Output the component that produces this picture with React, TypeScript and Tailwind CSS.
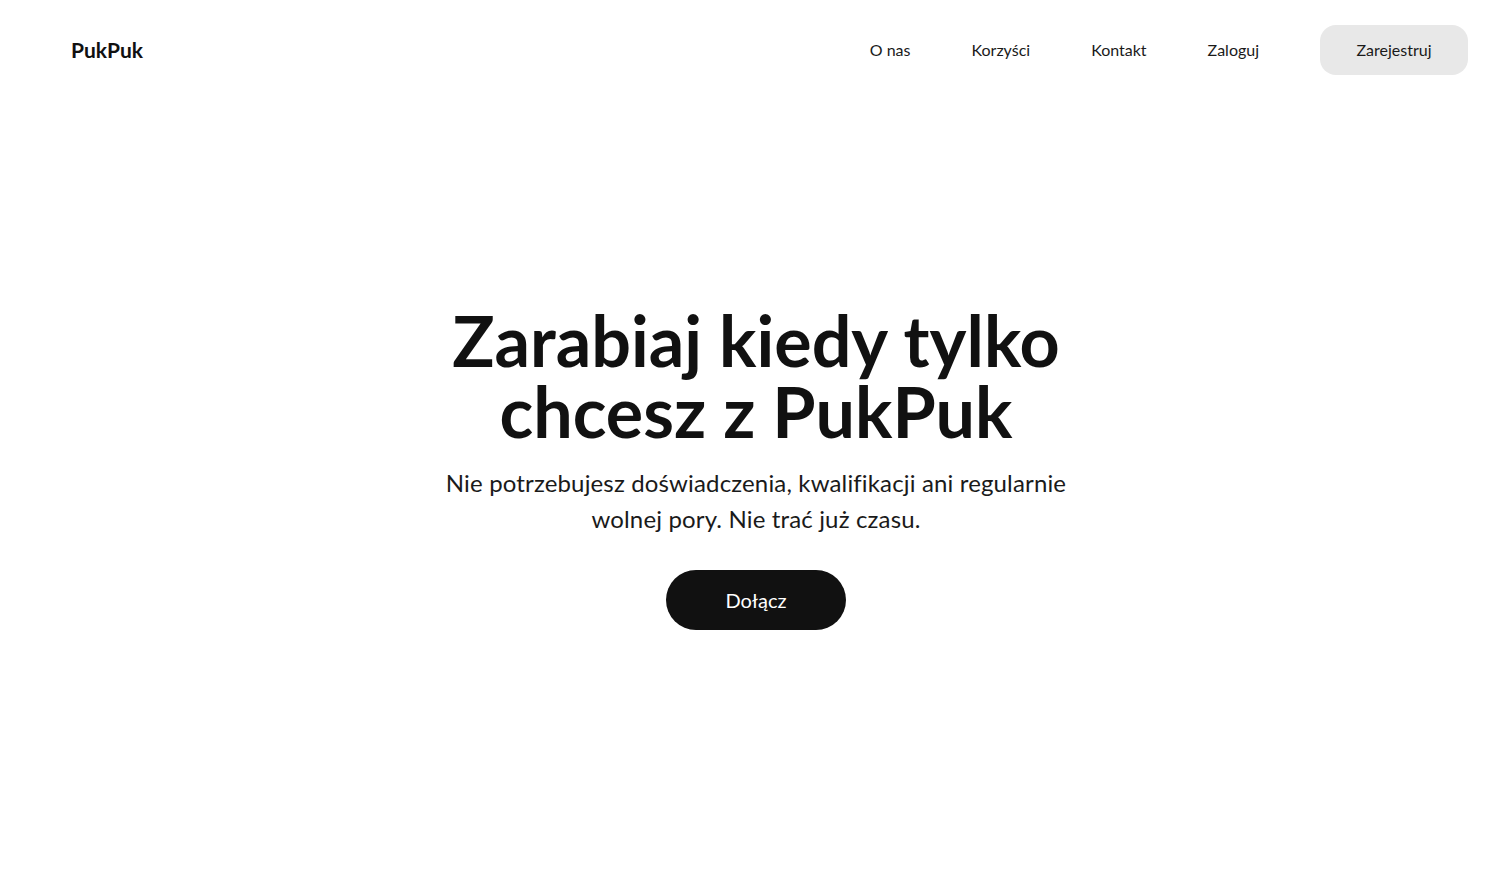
export default function App() {
  const links = ["O nas", "Korzyści", "Kontakt", "Zaloguj"]

  return (
    <div className="min-h-screen bg-white text-[#111] font-['Lato','Open_Sans',sans-serif]">
      <header className="flex h-[100px] items-center justify-between pl-[71px] pr-[44px]">
        <a href="#" className="text-[21px] font-bold">
          PukPuk
        </a>
        <nav className="flex items-center">
          {links.map((link) => (
            <a key={link} href="#" className="mr-[61px] text-[16px] text-[#1a1a1a]">
              {link}
            </a>
          ))}
          <button className="h-[50px] w-[148px] rounded-[16px] bg-[#e8e8e8] text-[16px] text-[#1a1a1a]">
            Zarejestruj
          </button>
        </nav>
      </header>

      <main className="flex flex-col items-center pt-[205px] text-center">
        <h1 className="text-[70px] font-bold leading-[71px]">
          Zarabiaj kiedy tylko
          <br />
          chcesz z PukPuk
        </h1>
        <p className="mt-[18px] text-[24px] leading-[36px] tracking-[0.15px] text-[#1a1a1a]">
          Nie potrzebujesz doświadczenia, kwalifikacji ani regularnie
          <br />
          wolnej pory. Nie trać już czasu.
        </p>
        <button className="mt-[33px] h-[60px] w-[180px] rounded-full bg-[#111] text-[20px] text-white">
          Dołącz
        </button>
      </main>
    </div>
  )
}
